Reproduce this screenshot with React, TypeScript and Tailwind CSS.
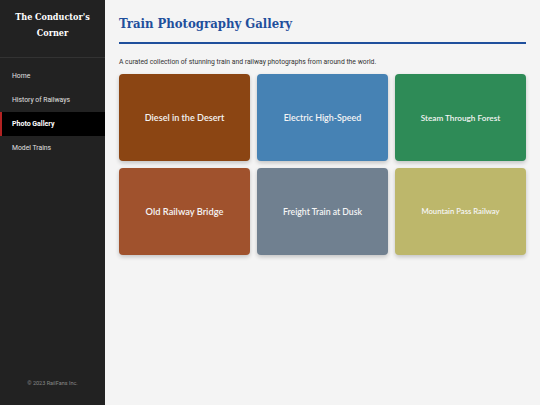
const NAV = [
  { label: "Home", active: false },
  { label: "History of Railways", active: false },
  { label: "Photo Gallery", active: true },
  { label: "Model Trains", active: false },
];

const PHOTOS = [
  { title: "Diesel in the Desert", bg: "bg-[#8b4513]", size: "text-[9.1px]" },
  { title: "Electric High-Speed", bg: "bg-[#4682b4]", size: "text-[8.9px]" },
  { title: "Steam Through Forest", bg: "bg-[#2e8b57]", size: "text-[8.2px]" },
  { title: "Old Railway Bridge", bg: "bg-[#a0522d]", size: "text-[9.3px]" },
  { title: "Freight Train at Dusk", bg: "bg-[#708090]", size: "text-[8.7px]" },
  { title: "Mountain Pass Railway", bg: "bg-[#bdb76b]", size: "text-[7.7px]" },
];

const slab = "font-['Roboto_Slab','DejaVu_Serif',serif] font-stretch-condensed";

export default function App() {
  return (
    <div className="flex h-[405px] w-[540px] bg-[#f4f4f4] font-['Roboto',sans-serif]">
      {/* Sidebar */}
      <aside className="flex w-[105px] shrink-0 flex-col bg-[#222222] text-[#dddddd]">
        <div className="border-b border-[#333333] pt-[9px] pb-[16px] text-center">
          <h2 className={`${slab} text-[9px] leading-[16px] font-bold text-white`}>
            The Conductor's
            <br />
            Corner
          </h2>
        </div>

        <nav className="mt-[6px] flex flex-col">
          {NAV.map((item) =>
            item.active ? (
              <a
                key={item.label}
                className="flex h-[24px] items-center border-l-2 border-[#b22222] bg-black pl-[10px] text-[7px] font-bold text-white"
              >
                {item.label}
              </a>
            ) : (
              <a key={item.label} className="flex h-[24px] items-center pl-[12px] text-[6.8px] text-[#e0e0e0]">
                {item.label}
              </a>
            )
          )}
        </nav>

        <p className="mt-auto pb-[18px] text-center text-[5.5px] text-[#888888]">© 2023 RailFans Inc.</p>
      </aside>

      {/* Main */}
      <main className="flex-1 px-[14px] pt-[15px]">
        <h1 className={`${slab} border-b-2 border-[#1f4f9c] pb-[9px] text-[13px] leading-[18px] font-bold text-[#1f4f9c]`}>
          Train Photography Gallery
        </h1>

        <p className="mt-[13px] text-[6.8px] text-[#333333]">
          A curated collection of stunning train and railway photographs from around the world.
        </p>

        <div className="mt-[7px] grid grid-cols-3 gap-[7px]">
          {PHOTOS.map((p) => (
            <div
              key={p.title}
              className={`flex h-[87px] items-center justify-center rounded-[4px] shadow-[0_2px_4px_rgba(0,0,0,0.2)] ${p.bg}`}
            >
              <span className={`font-['Lato',sans-serif] font-semibold text-[#f5f5f5] ${p.size}`}>{p.title}</span>
            </div>
          ))}
        </div>
      </main>
    </div>
  );
}
